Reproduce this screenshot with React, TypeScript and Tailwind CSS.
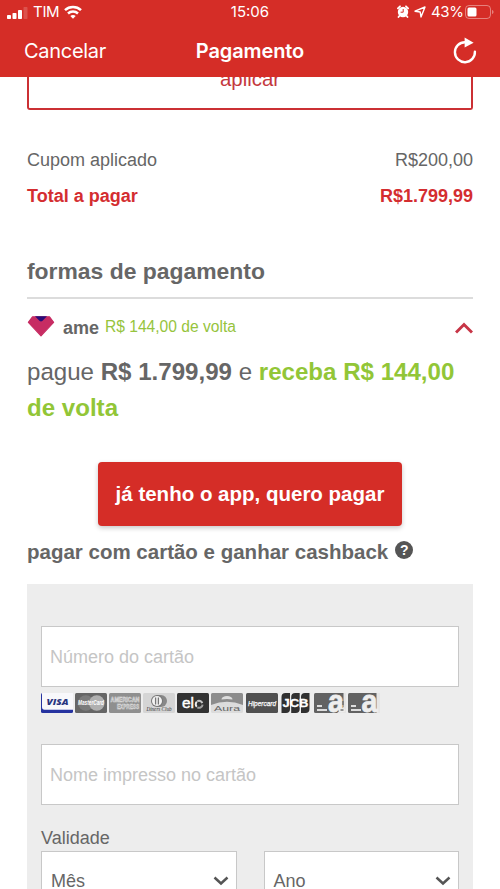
import type { ReactNode } from "react";

function StatusBar() {
  return (
    <div className="grid h-6 grid-cols-3 items-center text-[15px] leading-6 text-white">
      <div className="flex items-center pl-[7px]">
        <svg width="21" height="12" viewBox="0 0 21 12" fill="#fff" className="mt-px">
          <rect x="0" y="8" width="4" height="4" rx="0.8" />
          <rect x="5.5" y="6" width="4" height="6" rx="0.8" />
          <rect x="11" y="3" width="4" height="9" rx="0.8" />
          <rect x="16.5" y="0" width="4" height="12" rx="0.8" opacity="0.18" />
        </svg>
        <span className="ml-[5px] w-[26px] whitespace-nowrap tracking-[-0.3px]">TIM</span>
        <svg width="18" height="14" viewBox="0 0 18 14" className="ml-[5px]" fill="none" stroke="#fff" strokeWidth="2.5">
          <path d="M1 5.1C5.4.9 12.6.9 17 5.1" />
          <path d="M4 8.5c2.8-2.6 7.2-2.6 10 0" />
          <path d="M6.3 11c1.5-1.4 3.9-1.4 5.4 0L9 13.8z" fill="#fff" stroke="none" />
        </svg>
      </div>
      <div className="text-center">15:06</div>
      <div className="flex items-center justify-end pr-[6px]">
        <svg width="12" height="13" viewBox="0 0 12 13" className="-mt-0.5">
          <circle cx="6" cy="7" r="5.2" fill="#fff" />
          <path d="M.9 3.3 3 1.3M11.1 3.3 9 1.3M2.3 11l-.8 1M9.7 11l.8 1" stroke="#fff" strokeWidth="1.8" strokeLinecap="round" />
          <path d="M6.2 4v3.2H3.6" fill="none" stroke="#d52d27" strokeWidth="1" />
        </svg>
        <svg width="12" height="12" viewBox="0 0 12 12" className="ml-[5px]">
          <path d="M11 1 7 11 6.2 6 1 5.2z" fill="none" stroke="#fff" strokeWidth="1.4" strokeLinejoin="round" />
        </svg>
        <span className="ml-[5px] w-[31px] whitespace-nowrap tracking-[-0.4px]">43%</span>
        <svg width="29" height="14" viewBox="0 0 29 14" className="ml-[3px]">
          <rect x=".5" y=".5" width="25" height="13" rx="3.5" fill="none" stroke="#fff" strokeOpacity=".4" />
          <rect x="2.5" y="2.5" width="9" height="9" rx="1.5" fill="#fff" />
          <path d="M27 5v4c2-.6 2-3.4 0-4" fill="#fff" opacity=".4" />
        </svg>
      </div>
    </div>
  );
}

function Header() {
  return (
    <header className="h-[77px] bg-[#d52d27] font-[Inter,sans-serif]">
      <StatusBar />
      <div className="grid h-[53px] grid-cols-[1fr_auto_1fr] items-center text-xl text-white">
        <span className="pl-6 tracking-[-0.3px]">Cancelar</span>
        <h1 className="font-semibold tracking-[-0.1px]">Pagamento</h1>
        <svg width="26" height="28" viewBox="0 0 26 28" className="mr-[22px] justify-self-end">
          <path d="M13 5.2A10 10 0 1 0 22.9 14.6" fill="none" stroke="#fff" strokeWidth="2.4" strokeLinecap="round" />
          <path d="M12.6.6 21.6 5.7 12.6 10.6z" fill="#fff" />
        </svg>
      </div>
    </header>
  );
}

function Card({ children, fill }: { children?: ReactNode; fill: string }) {
  return (
    <svg width="32" height="20" viewBox="0 0 32 20" fontFamily="Liberation Sans, sans-serif">
      <rect width="32" height="20" rx="1.5" fill={fill} />
      {children}
    </svg>
  );
}

function CardBrands() {
  return (
    <div className="mt-[6px] flex h-5 gap-[2.1px]">
      <Card fill="#2633a0">
        <path d="M1 0h31v16.8H3.5Q1 16.8 1 14z" fill="#f8f8fb" />
        <text x="16.5" y="11.5" fontFamily="Open Sans, sans-serif" fontSize="9.5" fontWeight="800" fontStyle="italic" fill="#29357f" textAnchor="middle" textLength="22" lengthAdjust="spacingAndGlyphs">VISA</text>
      </Card>
      <Card fill="#666">
        <circle cx="10.8" cy="10" r="7.8" fill="#7c7c7c" />
        <circle cx="21.8" cy="10" r="7.8" fill="#b0b0b0" />
        <text x="16" y="12.4" fontSize="6.5" fontWeight="bold" fontStyle="italic" fill="#fff" textAnchor="middle" textLength="26" lengthAdjust="spacingAndGlyphs">MasterCard</text>
      </Card>
      <Card fill="#8f8f8f">
        <g fill="#8f8f8f" stroke="#e4e4e4" strokeWidth=".5" fontSize="6.5" fontWeight="bold">
          <text x="1.5" y="9" textLength="29" lengthAdjust="spacingAndGlyphs">AMERICAN</text>
          <text x="8" y="15.5" textLength="22" lengthAdjust="spacingAndGlyphs">EXPRESS</text>
        </g>
      </Card>
      <Card fill="#d5d5d5">
        <path d="M14 2h4a6 6 0 0 1 0 12h-4z" fill="#888" />
        <circle cx="14" cy="8" r="6" fill="#777" />
        <circle cx="14" cy="8" r="5" fill="#f3f3f3" />
        <path d="M12.6 4.4v7.2M15.4 4.4v7.2" stroke="#777" strokeWidth="1.3" />
        <text x="16" y="18.3" fontFamily="Liberation Serif, serif" fontStyle="italic" fontSize="6" fill="#333" textAnchor="middle" textLength="25" lengthAdjust="spacingAndGlyphs">Diners Club</text>
      </Card>
      <Card fill="#333">
        <text x="5" y="14.8" fontSize="14" fill="#fff" stroke="#fff" strokeWidth=".4" textLength="12" lengthAdjust="spacingAndGlyphs">el</text>
        <path d="M19.8 13.8a3.5 3.5 0 0 1 0-5" fill="none" stroke="#eee" strokeWidth="2" />
        <path d="M20.2 8.3a3.500 3.500 0 0 1 5.100 1.800" fill="none" stroke="#c4c4c4" strokeWidth="2" />
        <path d="M25.600 11.600a3.500 3.500 0 0 1-5.200 2.700" fill="none" stroke="#a0a0a0" strokeWidth="2" />
      </Card>
      <Card fill="#dcdcdc">
        <path d="M0 12V1.5Q0 0 1.5 0h29Q32 0 32 1.5V12Q16 5.5 0 12" fill="#8c8c8c" />
        <path d="M10.5 6.4a5.5 3.4 0 0 1 11 0Q16 5.4 10.5 6.4" fill="#ddd" />
        <text x="16" y="18" fontSize="8" fill="#666" textAnchor="middle" textLength="26" lengthAdjust="spacingAndGlyphs">Aura</text>
      </Card>
      <Card fill="#505050">
        <text x="16" y="12.6" fontSize="7.5" fontStyle="italic" fill="#fff" stroke="#fff" strokeWidth=".25" textAnchor="middle" textLength="28" lengthAdjust="spacingAndGlyphs">Hipercard</text>
      </Card>
      <Card fill="#ededed">
        <path d="M1.500 20V4q0-4 4-4h4.500v16q0 4-4 4zM11.200 20V4q0-4 4-4h4.500v16q0 4-4 4zM21 20V4q0-4 4-4h4.500v16q0 4-4 4z" fill="#303030" />
        <text x="15.500" y="14" fontSize="11" fontWeight="bold" fill="#fff" stroke="#fff" strokeWidth=".3" textAnchor="middle" textLength="26" lengthAdjust="spacingAndGlyphs">JCB</text>
      </Card>
      <Card fill="#626262">
        <path d="M29.5 0H32v20h-9l6.500-6z" fill="#e4e4e4" />
        <text x="14" y="19.300" fontSize="31" fontWeight="bold" fill="#eee" stroke="#eee" strokeWidth=".8" textLength="16" lengthAdjust="spacingAndGlyphs">a</text>
        <path d="M29 8v4M26.500 17h3" stroke="#777" strokeWidth="1.6" />
        <path d="M3 13h5M3 17h10" stroke="#ddd" strokeWidth="1.8" />
      </Card>
      <Card fill="#626262">
        <path d="M28.500 0H32v20h-3.500z" fill="#e5e5e5" />
        <text x="13.500" y="19.300" fontSize="31" fontWeight="bold" fill="#eee" stroke="#eee" strokeWidth=".8" textLength="16" lengthAdjust="spacingAndGlyphs">a</text>
        <path d="M3 13h5M3 17h10" stroke="#ddd" strokeWidth="1.8" />
      </Card>
    </div>
  );
}

function Select({ label }: { label: string }) {
  return (
    <div className="flex h-[60px] w-[195.5px] items-center justify-between border border-[#c8c8c8] bg-white pr-[7px] pl-[9px] text-lg text-[#666]">
      <span>{label}</span>
      <svg width="16" height="10" viewBox="0 0 16 10" fill="none" stroke="#555" strokeWidth="2.5">
        <path d="m1.5 1.500 6.500 6 6.500-6" />
      </svg>
    </div>
  );
}

export default function App() {
  return (
    <div className="h-[889px] w-[500px] overflow-hidden bg-white font-['Liberation_Sans',Arial,sans-serif] text-[#666]">
      <Header />
      <main className="px-[27px]">
        <div className="h-[33px] overflow-hidden rounded-b-[3px] border-2 border-t-0 border-[#cb3034] text-center text-[20.4px] leading-5 text-[#c4393e]">
          <div className="-mt-2">aplicar</div>
        </div>
        <div className="mt-[37px] flex h-[26px] items-center justify-between text-lg">
          <span>Cupom aplicado</span>
          <span>R$200,00</span>
        </div>
        <div className="mt-[10px] flex h-[26px] items-center justify-between text-lg font-bold text-[#d42d30]">
          <span>Total a pagar</span>
          <span>R$1.799,99</span>
        </div>
        <h2 className="mt-12 text-[22.9px] leading-[28px] font-bold">formas de pagamento</h2>
        <div className="mt-3 h-0.5 bg-[#dcdcdc]" />
        <div className="mt-[15px] flex h-7 items-center">
          <svg width="28" height="21" viewBox="0 0 28 21" className="-mt-1">
            <path d="M5.500.8h17L26.600 6.300 14 19.800 1.400 6.300z" fill="#c72c63" stroke="#c72c63" strokeWidth="1.200" strokeLinejoin="round" />
            <path d="M8 .2h12L15.300 5q-1.300.8-2.600 0z" fill="#290c78" />
          </svg>
          <span className="ml-2 w-[42px] text-lg font-bold">ame</span>
          <span className="-mt-0.5 text-[15.6px] text-[#96c43d]">R$ 144,00 de volta</span>
          <svg width="18" height="12" viewBox="0 0 18 12" className="ml-auto" fill="none" stroke="#c73546" strokeWidth="3">
            <path d="m1 10.500 8-8 8 8" />
          </svg>
        </div>
        <p className="mt-3 text-[24.1px] leading-9">
          pague <b>R$ 1.799,99</b> e <b className="text-[#92c637]">receba R$ 144,00 de volta</b>
        </p>
        <button className="mx-auto mt-9 block h-16 w-[304px] rounded bg-[#d52d27] text-[20.5px] font-bold whitespace-nowrap text-white shadow-[0_2px_5px_rgba(0,0,0,0.22)]">
          já tenho o app, quero pagar
        </button>
        <div className="mt-3 flex h-7 items-center whitespace-nowrap">
          <h3 className="text-[20.5px] font-bold">pagar com cartão e ganhar cashback</h3>
          <span className="-mt-1 ml-[7px] flex size-[18px] items-center justify-center rounded-full bg-[#555] text-[14px] leading-none font-bold text-white">?</span>
        </div>
        <section className="mt-[18px] h-[305px] bg-[#ededed] px-[14px] pt-[42px]">
          <div className="flex h-[61px] w-[418px] items-center border border-[#c8c8c8] bg-white pl-2 text-lg text-[#c5c5c5]">Número do cartão</div>
          <CardBrands />
          <div className="mt-[31px] flex h-[61px] w-[418px] items-center border border-[#c8c8c8] bg-white pl-2 text-lg text-[#c5c5c5]">Nome impresso no cartão</div>
          <div className="mt-5 text-lg leading-[26px]">Validade</div>
          <div className="flex justify-between">
            <Select label="Mês" />
            <Select label="Ano" />
          </div>
        </section>
      </main>
    </div>
  );
}
